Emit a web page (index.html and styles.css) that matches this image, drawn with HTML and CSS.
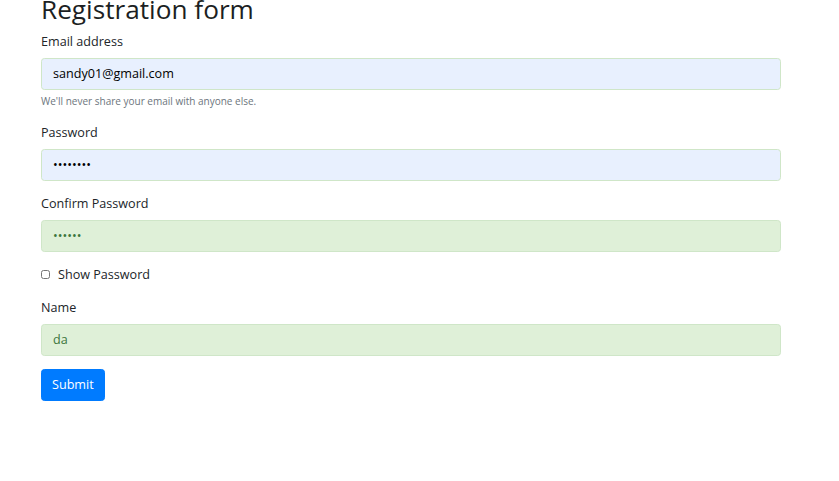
FILE: index.html
```html
<!DOCTYPE html>
<html lang="en">
<head>
    <meta charset="UTF-8">
    <meta name="viewport" content="width=device-width, initial-scale=1.0">
    <title>Registration form</title>
    <link rel="stylesheet" href="styles.css">
</head>
<body>
    <div class="container">
        <h2 class="page-title">Registration form</h2>
        <form class="reg-form">
            <div class="form-group">
                <label for="email">Email address</label>
                <input type="email" id="email" class="form-control autofilled" value="sandy01@gmail.com">
                <small class="form-text">We'll never share your email with anyone else.</small>
            </div>
            <div class="form-group">
                <label for="password">Password</label>
                <input type="password" id="password" class="form-control autofilled" value="12345678">
            </div>
            <div class="form-group">
                <label for="confirm">Confirm Password</label>
                <input type="password" id="confirm" class="form-control valid" value="123456">
            </div>
            <div class="form-group form-check">
                <input type="checkbox" id="show" class="check-input">
                <label for="show" class="check-label">Show Password</label>
            </div>
            <div class="form-group">
                <label for="name">Name</label>
                <input type="text" id="name" class="form-control valid" value="da">
            </div>
            <button type="submit" class="btn-primary">Submit</button>
        </form>
    </div>
</body>
</html>
```

FILE: styles.css
```css
body {
    font-family: 'Open Sans', 'Noto Sans', sans-serif;
    font-size: 12.6px;
    line-height: 20px;
    color: #212529;
    background-color: #fff;
    margin: 0;
    padding: 0;
}
.container {
    width: 740px;
    margin-left: 41px;
}
.page-title {
    font-size: 26.2px;
    font-weight: 500;
    line-height: 32px;
    color: #1c1f23;
    margin: -7px 0 6.5px 0;
}
.form-group {
    margin-bottom: 13px;
}
.form-group label {
    display: block;
    margin-bottom: 6.5px;
}
.form-control {
    display: block;
    box-sizing: border-box;
    width: 100%;
    height: 31.5px;
    padding: 5px 11px;
    font-family: inherit;
    font-size: 12.6px;
    color: #495057;
    border: 1px solid #cfe6c8;
    border-radius: 3.4px;
    outline: none;
}
.autofilled {
    background-color: #e8f0fe;
    color: #000;
}
.valid {
    background-color: #dff0d8;
    color: #3c763d;
}
.form-text {
    display: block;
    margin-top: 3.5px;
    font-size: 10px;
    line-height: 16.5px;
    color: #6c757d;
}
.form-check {
    display: flex;
    align-items: center;
    height: 20px;
}
.form-check .check-label {
    margin: 0 0 0 8px;
}
.check-input {
    width: 9px;
    height: 9px;
    margin: 0;
}
.btn-primary {
    font-family: inherit;
    font-size: 12.6px;
    line-height: 20px;
    color: #fff;
    background-color: #007bff;
    border: 1px solid #007bff;
    border-radius: 3.4px;
    height: 32px;
    padding: 0 10px;
    cursor: pointer;
}
```
